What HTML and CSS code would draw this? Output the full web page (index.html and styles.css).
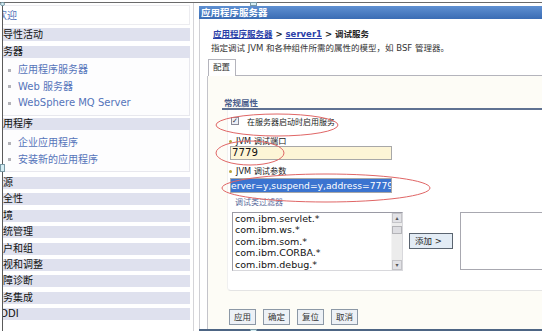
FILE: index.html
```html
<!DOCTYPE html>
<html lang="zh">
<head>
<meta charset="utf-8">
<title>应用程序服务器</title>
<link rel="stylesheet" href="styles.css">
</head>
<body>
<div class="page">
  <div class="topline"></div>
  <div class="main">
    <div class="left">
      <div class="nav">
        <div class="welcome"><span class="lnk">欢迎</span></div>
        <div class="hd first">引导性活动</div>
        <div class="hd">服务器</div>
        <ul class="items three">
          <li><span class="bul"></span><span class="lnk">应用程序服务器</span></li>
          <li><span class="bul"></span><span class="lnk">Web 服务器</span></li>
          <li><span class="bul"></span><span class="lnk">WebSphere MQ Server</span></li>
        </ul>
        <div class="hd">应用程序</div>
        <ul class="items two">
          <li><span class="bul"></span><span class="lnk">企业应用程序</span></li>
          <li><span class="bul"></span><span class="lnk">安装新的应用程序</span></li>
        </ul>
        <div class="hd gap">资源</div>
        <div class="hd">安全性</div>
        <div class="hd">环境</div>
        <div class="hd">系统管理</div>
        <div class="hd">用户和组</div>
        <div class="hd">监视和调整</div>
        <div class="hd">故障诊断</div>
        <div class="hd">服务集成</div>
        <div class="hd last">UDDI</div>
      </div>
    </div>
    <div class="right">
      <div class="titlebar">应用程序服务器</div>
      <div class="content">
        <div class="crumb"><span class="clink">应用程序服务器</span> &gt; <span class="clink">server1</span> &gt; 调试服务</div>
        <div class="desc">指定调试 JVM 和各种组件所需的属性的模型，如 BSF 管理器。</div>
        <div class="tabs"><div class="tab">配置</div><div class="tabline"></div></div>
        <div class="panel">
          <div class="sechead">常规属性</div>
          <div class="section">
            <div class="chkrow"><span class="chk">✓</span><span>在服务器启动时启用服务</span></div>
            <div class="lbl"><span class="req"></span>JVM 调试端口</div>
            <div class="field">7779</div>
            <div class="lbl second"><span class="req"></span>JVM 调试参数</div>
            <div class="field sel"><span class="hl">erver=y,suspend=y,address=7779</span></div>
            <div class="sublbl">调试类过滤器</div>
            <div class="filters">
              <div class="list">
                <div class="opts">
                  <div>com.ibm.servlet.*</div>
                  <div>com.ibm.ws.*</div>
                  <div>com.ibm.som.*</div>
                  <div>com.ibm.CORBA.*</div>
                  <div>com.ibm.debug.*</div>
                </div>
                <div class="sbar">
                  <div class="sbtn">▴</div>
                  <div class="thumb"></div>
                  <div class="track"></div>
                  <div class="sbtn">▾</div>
                </div>
              </div>
              <div class="addbtn">添加 &gt;</div>
              <div class="list2"></div>
            </div>
          </div>
          <div class="buttons">
            <span class="btn">应用</span>
            <span class="btn">确定</span>
            <span class="btn">复位</span>
            <span class="btn">取消</span>
          </div>
        </div>
      </div>
    </div>
  </div>
  <div class="handle h1"></div>
  <div class="handle h2"></div>
  <div class="handle h3"></div>
  <div class="handle h4"></div>
  <svg class="marks" width="542" height="331" viewBox="0 0 542 331">
    <ellipse cx="277" cy="123" rx="61" ry="11"/>
    <ellipse cx="250" cy="151" rx="34" ry="12"/>
    <ellipse cx="326" cy="186" rx="104" ry="14"/>
  </svg>
</div>
</body>
</html>
```
FILE: styles.css
```css
* { box-sizing: border-box; }
html, body { margin: 0; padding: 0; }
body {
  width: 542px;
  height: 331px;
  overflow: hidden;
  background: #fff;
  font-family: "DejaVu Sans", "Noto Sans CJK SC", sans-serif;
  color: #222;
}
.page { position: relative; width: 542px; height: 331px; }
.topline { margin-top: 2px; border-top: 1px solid #6a6a6a; }
.main { display: flex; height: 328px; }

/* left navigation */
.left {
  flex: 0 0 192px;
  margin-left: 2px;
  width: 192px;
  border-left: 1px solid #5a5a5a;
  border-right: 1px solid #d4d4d8;
  overflow: hidden;
  font-size: 10px;
}
.nav { margin-left: -10px; width: 197px; }
.welcome {
  margin-top: 2px;
  height: 20px;
  line-height: 20px;
  padding-left: 4px;
  border: 1px solid #ececf0;
  border-left: none;
}
.lnk { color: #5574ba; }
.hd {
  height: 12px;
  line-height: 12px;
  background: #dfe1ee;
  margin-bottom: 4.4px;
  white-space: nowrap;
  color: #111;
}
.hd.first { margin-top: 3px; height: 13px; line-height: 13px; margin-bottom: 5px; }
.hd.gap { margin-top: 5px; }
.hd.last { margin-top: 1.8px; }
.items {
  list-style: none;
  margin: -4.4px 0 2px;
  padding: 4px 0 0 15px;
  border: 1px solid #e8e8ee;
  border-top: none;
  border-left: none;
  background: #fdfdfe;
}
.items.three { height: 58px; }
.items.two { height: 42px; padding-top: 5px; margin-bottom: 0; }
.items li {
  height: 16.5px;
  line-height: 16.5px;
  display: flex;
  align-items: center;
  white-space: nowrap;
}
.bul {
  width: 3px; height: 3px;
  background: #b2b2b8;
  margin-right: 7px;
}

/* right side */
.right {
  margin-left: 5px;
  flex: 1 1 auto;
  min-width: 0;
  overflow: hidden;
  display: flex;
  flex-direction: column;
  border-bottom: 2px solid #4d6584;
}
.titlebar {
  margin-top: 3px;
  height: 13px;
  line-height: 13px;
  background: linear-gradient(#5f90d2, #3a6cb4);
  color: #fff;
  font-weight: bold;
  font-size: 9.5px;
  padding-left: 2px;
  white-space: nowrap;
}
.content {
  flex: 1;
  border-left: 1px solid #cfcfd4;
  display: flex;
  flex-direction: column;
  font-size: 8.5px;
}
.crumb {
  margin: 9px 0 0 13px;
  height: 12px;
  line-height: 12px;
  font-weight: bold;
  white-space: nowrap;
}
.clink { color: #2a40a8; text-decoration: underline; }
.desc {
  margin: 2px 0 0 11px;
  height: 12px;
  line-height: 12px;
  color: #333;
  white-space: nowrap;
}
.tabs { margin-top: 5px; display: flex; align-items: flex-end; padding-left: 8px; }
.tab {
  width: 28px;
  height: 17px;
  line-height: 15px;
  border: 1px solid #b4b4bc;
  border-bottom: none;
  padding-left: 4px;
  background: #fff;
  color: #333;
}
.tabline { flex: 1; border-bottom: 1px solid #b4b4bc; }
.panel {
  flex: 1;
  margin-left: 7px;
  border-left: 1px solid #c4c4ca;
  background: #fdfcf6;
  display: flex;
  flex-direction: column;
}
.sechead {
  margin: 22px 0 0 14px;
  height: 12px;
  line-height: 11px;
  padding-left: 2px;
  color: #4b5e8c;
  font-weight: bold;
  border-bottom: 2px solid #5f7191;
}
.section {
  margin-left: 19px;
  background: #fff;
  border-bottom: 1px solid #e4e4e4;
  border-left: 1px solid #f0f0f0;
  border-bottom-left-radius: 4px;
  padding: 0 0 19px 1px;
  display: flex;
  flex-direction: column;
}
.chkrow {
  margin-top: 5px;
  height: 12px;
  display: flex;
  align-items: center;
  font-size: 8px;
  color: #222;
  white-space: nowrap;
}
.chk {
  width: 8px; height: 8px;
  margin-left: 2px;
  margin-right: 8px;
  border: 1px solid #8a8a98;
  background: #eef0f6;
  font-size: 7px;
  line-height: 6px;
  text-align: center;
  color: #334;
}
.lbl {
  margin-top: 9px;
  height: 10px;
  line-height: 10px;
  font-size: 8.2px;
  display: flex;
  align-items: center;
  white-space: nowrap;
}
.lbl.second { margin-top: 6px; }
.req {
  width: 3px; height: 3px;
  border-radius: 50%;
  background: #b9a33a;
  margin-right: 4px;
}
.field {
  margin-left: 1px;
  width: 162px;
  height: 14px;
  border: 1px solid #a8a8a8;
  background: #fdf5d6;
  font-size: 10.2px;
  line-height: 12px;
  padding-left: 1px;
  color: #111;
  white-space: nowrap;
  overflow: hidden;
}
.field.sel { margin-top: 2px; height: 15px; background: #fff; font-size: 9.2px; line-height: 13px; padding-left: 0; }
.hl { display: inline-block; width: 100%; background: #3b74d0; color: #fff; }
.sublbl {
  margin: 5px 0 0 6px;
  height: 10px;
  line-height: 10px;
  font-size: 8px;
  color: #5c6c9c;
}
.filters { margin-top: 4px; display: flex; align-items: flex-start; padding-left: 3px; }
.list {
  flex: 0 0 171px;
  height: 59px;
  border: 1px solid #9a9aa4;
  border-right-color: #d8d8dc;
  border-bottom-color: #d8d8dc;
  display: flex;
  background: #fff;
}
.opts {
  flex: 1;
  padding: 0 0 0 2px;
  font-size: 9.5px;
  line-height: 11.4px;
  color: #111;
  white-space: nowrap;
  overflow: hidden;
}
.sbar { width: 11px; display: flex; flex-direction: column; background: #ececec; border-left: 1px solid #f4f4f4; }
.sbtn {
  height: 10px;
  background: #e2e2e6;
  border: 1px solid #c4c4c8;
  font-size: 6px;
  line-height: 8px;
  text-align: center;
  color: #555;
}
.thumb { height: 8px; margin-top: 3px; border: 1px solid #b4b4b8; background: #dedee2; }
.track { flex: 1; }
.addbtn {
  flex: 0 0 44px;
  margin: 21px 0 0 6px;
  height: 16px;
  line-height: 14px;
  border: 1px solid #5a6470;
  background: #e3ecf5;
  padding-left: 5px;
  font-size: 8.5px;
  color: #222;
  white-space: nowrap;
}
.list2 {
  margin-left: 7px;
  flex: 0 0 100px;
  height: 58px;
  border: 1px solid #a8a8b0;
  background: #fff;
}
.buttons { margin: 18px 0 0 21px; display: flex; gap: 7px; }
.btn {
  height: 16px;
  line-height: 14px;
  padding: 0 4px;
  border: 1px solid #8c98a6;
  background: #edf1f6;
  color: #333;
  font-size: 8.5px;
}

.handle {
  position: absolute;
  background: #d6eef4;
  border: 1px solid #7a9aa6;
}
.h1 { left: 0; top: 0; width: 5px; height: 4px; border-radius: 2px; }
.h2 { left: 0; top: 162px; width: 5px; height: 8px; }
.h3 { left: 250px; top: 0; width: 7px; height: 4px; }
.h4 { left: 250px; top: 327px; width: 7px; height: 4px; }

.marks { position: absolute; left: 0; top: 0; pointer-events: none; }
.marks ellipse { fill: none; stroke: #e06666; stroke-width: 1; }
```
